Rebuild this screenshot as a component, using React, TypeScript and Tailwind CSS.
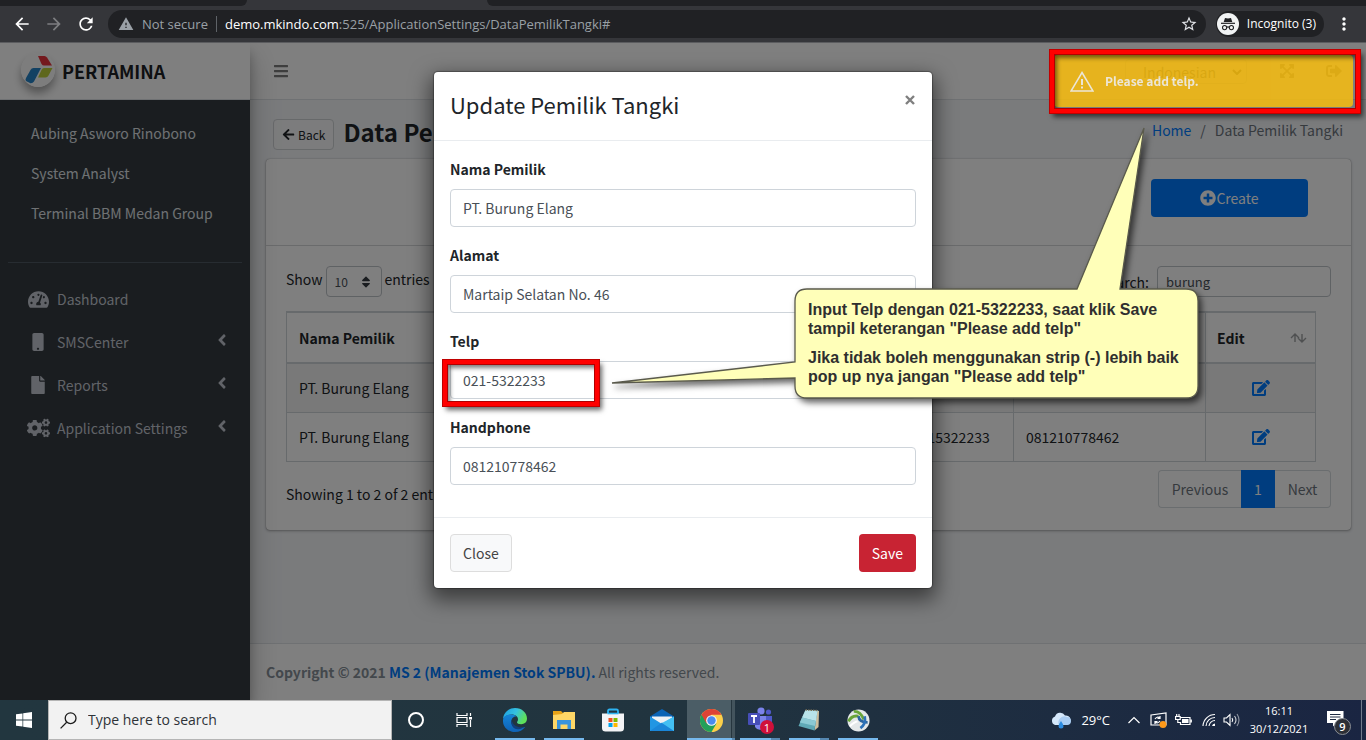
import { useState } from "react";
import type { ReactNode } from "react";
import {
  FaAngleLeft,
  FaArrowLeft,
  FaBars,
  FaCogs,
  FaEdit,
  FaExpandArrowsAlt,
  FaFile,
  FaMobile,
  FaPlusCircle,
  FaSignOutAlt,
  FaSort,
  FaTachometerAlt,
} from "react-icons/fa";
import {
  MdArrowBack,
  MdArrowForward,
  MdMoreVert,
  MdRefresh,
  MdStarBorder,
  MdWarning,
} from "react-icons/md";

function BrowserBar() {
  return (
    <header className="relative z-30 bg-[#35363a] font-['Open_Sans',sans-serif] text-[13px] text-[#9aa0a6]">
      <div className="flex h-[6px] bg-[#35363a]">
        <div className="w-[247px] rounded-br-lg bg-[#202124]" />
        <div className="w-[240px]" />
        <div className="flex-1 rounded-bl-lg bg-[#202124]" />
      </div>
      <div className="flex h-[37px] items-center border-b border-[#5b5c5f] px-[12px]">
        <button type="button" aria-label="Back" className="text-white">
          <MdArrowBack size={20} />
        </button>
        <button type="button" aria-label="Forward" className="ml-3 text-[#7d7e81]">
          <MdArrowForward size={20} />
        </button>
        <button type="button" aria-label="Reload" className="ml-3 text-white">
          <MdRefresh size={20} />
        </button>
        <div className="ml-3 flex h-7 flex-1 items-center rounded-full bg-[#202124] pr-[8px] pl-[10px]">
          <MdWarning size={16} />
          <span className="ml-2">Not secure</span>
          <span className="mx-2 h-4 w-px bg-[#5f6368]" />
          <span>
            <span className="text-white">demo.mkindo.com</span>:525/ApplicationSettings/DataPemilikTangki#
          </span>
          <button type="button" aria-label="Bookmark" className="ml-auto text-[#dfe1e5]">
            <MdStarBorder size={18} />
          </button>
        </div>
        <div className="ml-[10px] flex h-[26px] items-center gap-2 rounded-full bg-[#202124] pr-[8px] pl-[1px] text-[12px] text-white">
          <svg viewBox="0 0 22 22" className="size-[22px]">
            <circle cx="11" cy="11" r="11" fill="#f1f3f4" />
            <path d="M8 5l3 .6L14 5l1.3 4H6.7z" fill="#202124" />
            <path d="M4 10.3h14" stroke="#202124" strokeWidth="1.2" />
            <g fill="none" stroke="#202124" strokeWidth="1.1">
              <circle cx="7.6" cy="14.6" r="2.1" />
              <circle cx="14.4" cy="14.6" r="2.1" />
              <path d="M9.7 14.2q1.3-.7 2.6 0" />
            </g>
          </svg>
          Incognito (3)
        </div>
        <button type="button" aria-label="Browser menu" className="ml-[10px] text-white">
          <MdMoreVert size={20} />
        </button>
      </div>
    </header>
  );
}

function MenuItem({ icon, label, nested }: { icon: ReactNode; label: string; nested?: boolean }) {
  return (
    <li>
      <a href="#" className="flex h-10 items-center pr-[11px] pl-[18px]">
        <span className="flex w-[24px] justify-center">{icon}</span>
        <span className="ml-[7px] flex-1">{label}</span>
        {nested && <FaAngleLeft size={18} className="mb-1" />}
      </a>
    </li>
  );
}

function Sidebar() {
  return (
    <aside className="z-10 flex w-[250px] shrink-0 flex-col bg-[#343a40] shadow-[0_14px_28px_rgba(0,0,0,0.25),0_10px_10px_rgba(0,0,0,0.22)]">
      <a href="#" className="flex h-[57px] items-center border-b border-[#dee2e6] bg-white pl-[21px]">
        <svg viewBox="0 0 34 34" className="mb-[3px] size-[34px] rounded-full shadow-[0_6px_8px_rgba(0,0,0,0.35)]">
          <circle cx="17" cy="17" r="17" fill="#fafafa" />
          <path d="M17 3h6.500q1.500 0 2.500 1.500L31 12.500h-8q-1.500 0-2.500-1.500z" fill="#e8323c" />
          <path d="M12.500 15H20l-7 13.500q-1.200 2-3.500 1.800L5 28q-1-1 0-3l4.500-8q1-2 3-2z" fill="#2583c6" />
          <path d="M23 15h8.500l-4 7.500q-1 2-3 2H17l3.500-7.500q1-2 2.500-2z" fill="#bccf3a" />
        </svg>
        <span className="ml-[7px] text-[18px] font-bold text-[#1d2124]">PERTAMINA</span>
      </a>
      <nav className="px-2 text-[#c2c7d0]">
        <ul className="border-b border-[#4f5962] pt-[13px] pb-[29px] text-[#dfe2e6]">
          {["Aubing Asworo Rinobono", "System Analyst", "Terminal BBM Medan Group"].map((text) => (
            <li key={text}>
              <a href="#" className="flex h-10 items-center pl-[23px]">
                {text}
              </a>
            </li>
          ))}
        </ul>
        <ul className="mt-[16px] flex flex-col gap-[3px]">
          <MenuItem icon={<FaTachometerAlt className="h-[19px] w-[21px]" />} label="Dashboard" />
          <MenuItem icon={<FaMobile size={18} />} label="SMSCenter" nested />
          <MenuItem icon={<FaFile size={18} />} label="Reports" nested />
          <MenuItem icon={<FaCogs className="h-[22px] w-[23px]" />} label="Application Settings" nested />
        </ul>
      </nav>
    </aside>
  );
}

function Navbar() {
  return (
    <div className="flex h-[57px] items-center border-b border-[#dee2e6] bg-white pr-[24px] pl-[23px] text-[#7d7d7d]">
      <button type="button" aria-label="Toggle menu">
        <FaBars size={16} />
      </button>
      <div className="relative ml-auto">
        <select
          aria-label="Language"
          defaultValue="Indonesian"
          className="h-[25px] w-[122px] appearance-none rounded border border-[#ced4da] bg-white pl-[17px] text-[#495057]"
        >
          <option>Indonesian</option>
          <option>English</option>
        </select>
        <svg viewBox="0 0 10 6" className="pointer-events-none absolute top-[10px] right-[5px] w-[10px]">
          <path d="M1 1l4 4 4-4" fill="none" stroke="#343a40" strokeWidth="2" />
        </svg>
      </div>
      <button type="button" aria-label="Full screen" className="ml-[32px]">
        <FaExpandArrowsAlt size={16} />
      </button>
      <button type="button" aria-label="Sign out" className="ml-[31px]">
        <FaSignOutAlt size={16} />
      </button>
    </div>
  );
}

const owners = [
  { name: "PT. Burung Elang", address: "Martaip Selatan No. 46", phone: "0215322233", mobile: "081210778462" },
  { name: "PT. Burung Elang", address: "Martaip Selatan No. 46", phone: "0215322233", mobile: "081210778462" },
];

function OwnersCard() {
  const [query, setQuery] = useState("burung");
  return (
    <section className="rounded bg-white shadow-[0_0_1px_rgba(0,0,0,0.4),0_1px_3px_rgba(0,0,0,0.3)]">
      <div className="flex justify-end border-b border-[#d5d7d9] pt-[20px] pr-[43px] pb-[28px]">
        <button
          type="button"
          className="flex h-[38px] w-[157px] items-center justify-center rounded bg-[#007bff] text-white"
        >
          <FaPlusCircle size={16} />
          Create
        </button>
      </div>
      <div className="px-5 pt-5 pb-[22px]">
        <div className="flex h-[31px] items-start justify-between">
          <label className="flex items-start gap-[3px]">
            <span className="leading-[26px]">Show</span>
            <span className="relative">
              <select
                defaultValue="10"
                className="h-[31px] w-[56px] appearance-none rounded border border-[#bfc4c9] bg-white pl-2 text-[12px] text-[#495057]"
              >
                <option>10</option>
                <option>25</option>
                <option>50</option>
              </select>
              <FaSort size={14} className="pointer-events-none absolute top-[9px] right-[9px] text-[#343a40]" />
            </span>
            <span className="leading-[26px]">entries</span>
          </label>
          <label className="flex items-center gap-2">
            Search:
            <input
              type="search"
              value={query}
              onChange={(e) => setQuery(e.target.value)}
              className="h-[31px] w-[174px] rounded border border-[#bfc4c9] bg-white px-2 text-[13px] text-[#495057]"
            />
          </label>
        </div>
        <div className="pt-[14px] pr-[15px]">
          <table className="w-full table-fixed border-collapse border border-[#cfd4d8] text-left">
            <colgroup>
              <col className="w-[190px]" />
              <col />
              <col className="w-[114px]" />
              <col className="w-[192px]" />
              <col className="w-[110px]" />
            </colgroup>
            <thead>
              <tr className="h-[51px] border-t-2 border-b-2 border-[#cfd4d8]">
                {["Nama Pemilik", "Alamat", "Telp", "Handphone"].map((title) => (
                  <th key={title} className="border-x border-[#cfd4d8] px-3 font-bold">
                    {title}
                  </th>
                ))}
                <th className="border-x border-[#cfd4d8] pr-[8px] pl-[11px] font-bold">
                  <span className="flex items-center justify-between">
                    Edit
                    <svg viewBox="0 0 17 12" className="w-[17px] text-[#9ea0a2]">
                      <path
                        d="M5 10V2M1 6l4-4 4 4M12 2v8M8 6l4 4 4-4"
                        fill="none"
                        stroke="currentColor"
                        strokeWidth="1.4"
                      />
                    </svg>
                  </span>
                </th>
              </tr>
            </thead>
            <tbody>
              {owners.map((owner, i) => (
                <tr key={i} className="h-[49px] border-b border-[#cfd4d8] odd:bg-[#f2f2f2]">
                  <td className="border-x border-[#cfd4d8] px-3">{owner.name}</td>
                  <td className="border-x border-[#cfd4d8] px-3">{owner.address}</td>
                  <td className="border-x border-[#cfd4d8] px-3">{owner.phone}</td>
                  <td className="border-x border-[#cfd4d8] px-3">{owner.mobile}</td>
                  <td className="border-x border-[#cfd4d8] px-3">
                    <a href="#" aria-label="Edit owner" className="flex justify-center text-[#007bff]">
                      <FaEdit size={18} />
                    </a>
                  </td>
                </tr>
              ))}
            </tbody>
          </table>
        </div>
        <div className="mt-[8px] flex items-start justify-between">
          <p className="pt-[12px]">Showing 1 to 2 of 2 entries</p>
          <div className="flex h-[38px] text-[#6c757d]">
            <button type="button" className="w-[83px] rounded-l border border-r-0 border-[#d5dade]">
              Previous
            </button>
            <button type="button" className="w-[34px] bg-[#007bff] text-white">
              1
            </button>
            <button type="button" className="w-[56px] rounded-r border border-l-0 border-[#d5dade]">
              Next
            </button>
          </div>
        </div>
      </div>
    </section>
  );
}

function Content() {
  return (
    <div className="flex min-w-0 flex-1 flex-col bg-[#f4f6f9]">
      <Navbar />
      <main className="flex-1 pr-[15px] pl-4">
        <div className="flex items-start pt-[16px] pb-[9px]">
          <button
            type="button"
            className="mt-[3px] ml-[7px] flex h-[31px] items-center gap-[3px] rounded border border-[#cfd2d5] bg-[#f8f9fa] px-2 text-[12px] text-[#212529]"
          >
            <FaArrowLeft size={13} />
            Back
          </button>
          <h1 className="ml-[9px] text-[24px] leading-8 font-semibold">Data Pemilik Tangki</h1>
          <nav aria-label="Breadcrumb" className="mt-[2px] mr-[8px] ml-auto flex gap-[9px] text-[#6c757d]">
            <a href="#" className="text-[#007bff]">
              Home
            </a>
            <span>/</span>
            <span>Data Pemilik Tangki</span>
          </nav>
        </div>
        <OwnersCard />
      </main>
      <footer className="border-t border-[#dee2e6] bg-white px-4 pt-4 pb-4 text-[#869099]">
        <strong>
          Copyright © 2021{" "}
          <a href="#" className="text-[#007bff]">
            MS 2 (Manajemen Stok SPBU).
          </a>
        </strong>{" "}
        All rights reserved.
      </footer>
    </div>
  );
}

const fields = [
  { id: "nama", label: "Nama Pemilik", value: "PT. Burung Elang" },
  { id: "alamat", label: "Alamat", value: "Martaip Selatan No. 46" },
  { id: "telp", label: "Telp", value: "021-5322233" },
  { id: "handphone", label: "Handphone", value: "081210778462" },
];

function UpdateDialog() {
  return (
    <form
      role="dialog"
      aria-labelledby="dialog-title"
      onSubmit={(e) => e.preventDefault()}
      className="w-[498px] rounded bg-white shadow-[0_0_1px_1px_rgba(0,0,0,0.3),0_8px_20px_4px_rgba(0,0,0,0.5)]"
    >
      <div className="flex items-start justify-between border-b border-[#e9ecef] p-4">
        <h2 id="dialog-title" className="text-[22px] leading-8 font-normal">
          Update Pemilik Tangki
        </h2>
        <button
          type="button"
          aria-label="Close dialog"
          className="mb-3 flex h-6 items-center text-[#7f7f7f]"
        >
          <svg viewBox="0 0 12 12" className="size-[12px]">
            <path d="M2 2l8 8M10 2l-8 8" fill="none" stroke="currentColor" strokeWidth="2.4" />
          </svg>
        </button>
      </div>
      <div className="p-4">
        {fields.map((field) => (
          <div key={field.id} className="mb-4">
            <label htmlFor={field.id} className="mb-2 block font-bold">
              {field.label}
            </label>
            <input
              id={field.id}
              defaultValue={field.value}
              className="h-[38px] w-full rounded border border-[#ced4da] px-3 text-[#495057]"
            />
          </div>
        ))}
      </div>
      <div className="flex justify-between border-t border-[#e9ecef] p-4">
        <button type="button" className="h-[38px] rounded border border-[#ddd] bg-[#f8f9fa] px-3 text-[#444]">
          Close
        </button>
        <button type="submit" className="h-[38px] rounded bg-[#c82333] px-[13px] text-white">
          Save
        </button>
      </div>
    </form>
  );
}

function Toast() {
  return (
    <div
      role="alert"
      className="absolute top-[12px] right-[13px] z-20 flex h-[52px] w-[299px] items-center rounded-sm bg-[#f8bd0e] pl-4 text-[12px] font-bold text-white opacity-85"
    >
      <svg viewBox="0 0 24 21" className="h-[21px] w-[24px]" fill="none" stroke="#fff8e6">
        <path d="M12 1.500L23 20H1z" strokeWidth="1.500" />
        <path d="M12 8v6M12 15.500v2" strokeWidth="2" />
      </svg>
      <span className="ml-[11px] text-[#fff8e6]">Please add telp.</span>
    </div>
  );
}

function Annotations() {
  return (
    <>
      <div className="absolute top-[7px] right-[6px] z-20 h-[63px] w-[310px] border-[4px] border-[#ff0000] shadow-[0_0_0_1px_#c00000,3px_4px_5px_rgba(0,0,0,0.6),inset_0_0_0_1px_#b00000,inset_3px_4px_4px_rgba(0,0,0,0.5)]" />
      <div className="absolute top-[317px] left-[443px] z-20 h-[46px] w-[156px] border-[4px] border-[#ff0000] shadow-[0_0_0_1px_#c00000,3px_4px_5px_rgba(0,0,0,0.6),inset_0_0_0_1px_#b00000,inset_3px_4px_4px_rgba(0,0,0,0.5)]" />
      <div className="absolute top-[78px] left-[604px] z-20 w-[604px]">
        <svg
          viewBox="0 0 604 290"
          className="block h-[290px] w-[604px] drop-shadow-[3px_4px_3px_rgba(0,0,0,0.6)]"
          aria-hidden="true"
        >
          <path
            d="M203 168H473L540 7L516 168H582Q594 168 594 180V265Q594 277 582 277H203Q191 277 191 265V257L8 262L191 241V180Q191 168 203 168Z"
            fill="#ffffb9"
            stroke="#5a5a4c"
            strokeWidth="1.300"
          />
        </svg>
        <div className="absolute inset-x-0 top-[179px] flex flex-col gap-[10px] pr-[12px] pl-[204px] font-['Liberation_Sans',Arial,sans-serif] text-[16px] leading-[19px] font-bold text-[#2f2f2f]">
          <p>
            Input Telp dengan 021-5322233, saat klik Save
            <br />
            tampil keterangan "Please add telp"
          </p>
          <p>
            Jika tidak boleh menggunakan strip (-) lebih baik
            <br />
            pop up nya jangan "Please add telp"
          </p>
        </div>
      </div>
    </>
  );
}

const EdgeIcon = (
  <svg viewBox="0 0 24 24" className="size-6">
    <defs>
      <linearGradient id="edge-top" x1="0" y1="0" x2="1" y2="0.400">
        <stop offset="0" stopColor="#1b9de2" />
        <stop offset="0.550" stopColor="#35c1e0" />
        <stop offset="1" stopColor="#5ee05a" />
      </linearGradient>
      <linearGradient id="edge-low" x1="0" y1="0" x2="0" y2="1">
        <stop offset="0" stopColor="#1484d7" />
        <stop offset="1" stopColor="#0f62b5" />
      </linearGradient>
    </defs>
    <path d="M0 11C.6 4.600 5.700 0 12 0c7 0 12 5 12 10.500 0 3.600-2.600 5.700-5.800 5.700-2.600 0-4.200-1-4.200-2 0-.8 1-1 1-3C15 8.500 12 6.500 8.500 6.500 4 6.500 1 9 0 11z" fill="url(#edge-top)" />
    <path d="M0 12c.5-3.600 4-5.500 8-5.500 2.500 0 4.400.8 5.600 2.200-3-.6-5.300 2-5.300 5 0 5 5 8.300 10 6.500 1.500-.6 2.800-1.300 3.700-1.200C20 22 16.500 24 12 24 5.300 24-.4 19 0 12z" fill="url(#edge-low)" />
    <path d="M8.700 12c-1.700 6 3 10.500 8 9 2-.6 4-1.700 5-2.600-4.700 2.200-11.500.3-13-6.400z" fill="#123f7c" />
  </svg>
);

const ExplorerIcon = (
  <svg viewBox="0 0 22 20" className="w-[22px]">
    <path d="M0 1h8l2 2h12v16H0z" fill="#e8a317" />
    <path d="M0 5l9-1 2-2h11v17H0z" fill="#ffd766" />
    <path d="M4 10h14v9h-3.500v-4.500h-7V19H4z" fill="#3a94dc" />
  </svg>
);

const StoreIcon = (
  <svg viewBox="0 0 24 24" className="size-6">
    <path d="M7 7V3q0-1.500 1.500-1.500h7Q17 1.500 17 3v4" fill="none" stroke="#2db3f2" strokeWidth="1.800" />
    <path d="M1 5.500h22V20q0 3.500-3.500 3.500h-15Q1 23.500 1 20z" fill="#f4f4f6" />
    <path d="M6.500 5.500h11" stroke="#2db3f2" strokeWidth="1.600" />
    <path d="M7.500 10h4v4h-4z" fill="#f25022" />
    <path d="M12.500 10h4v4h-4z" fill="#7fba00" />
    <path d="M7.500 15h4v4h-4z" fill="#00a4ef" />
    <path d="M12.500 15h4v4h-4z" fill="#ffb900" />
  </svg>
);

const MailIcon = (
  <svg viewBox="0 0 24 22" className="w-6">
    <path d="M0 7.500L12 0l12 7.500V12H0z" fill="#0a63b5" />
    <path d="M2 7.500h20V15H2z" fill="#eef1f4" />
    <path d="M0 7.500l12 7.500L24 7.500V22H0z" fill="#2196e3" />
    <path d="M0 22l12-8.500L24 22z" fill="#1a86d8" />
    <path d="M12 14L24 7.500V22z" fill="#43bff2" />
  </svg>
);

const ChromeIcon = (
  <svg viewBox="0 0 24 24" className="size-[23px]">
    <circle cx="12" cy="12" r="12" fill="#fcd04a" />
    <path d="M12 12l5.200 3L12 24A12 12 0 0 1 1.600 6z" fill="#23a05a" />
    <path d="M12 6h10.400a12 12 0 0 0-20.800 0l5.200 9z" fill="#de4335" />
    <circle cx="12" cy="12" r="5.600" fill="#f4f6f8" />
    <circle cx="12" cy="12" r="4.400" fill="#4a8bf0" />
  </svg>
);

const TeamsIcon = (
  <svg viewBox="0 0 26 26" className="size-[26px]">
    <circle cx="14" cy="4" r="3.600" fill="#7b83eb" />
    <circle cx="21.500" cy="5" r="2.600" fill="#5059c9" />
    <path d="M17 9h8v7a4 4 0 0 1-6 3z" fill="#5059c9" />
    <path d="M8 9h11v8a6 6 0 0 1-11 3z" fill="#7b83eb" />
    <rect x="1" y="6" width="12" height="12" rx="1" fill="#464eb8" />
    <path d="M4 9h6M7 9v7" stroke="#fff" strokeWidth="1.800" />
  </svg>
);

const NotepadIcon = (
  <svg viewBox="0 0 24 24" className="size-6">
    <path d="M20 2.500l2 .5-.5 16-4 3.500z" fill="#cdbf9e" />
    <path d="M8.500 2L20.500 2.500 17.500 22.500 1.500 18z" fill="#5fa9b6" />
    <path d="M8.500 2L20.500 2.500 19 13 5 9.500z" fill="#b9e4ea" />
    <path d="M5 9.500L19 13l-.8 5L2.800 14.500z" fill="#8ccad4" />
    <path d="M8.500 2l12 .5" stroke="#7d7257" strokeWidth="1.400" strokeDasharray="1.500 1" />
  </svg>
);

const SyncIcon = (
  <svg viewBox="0 0 24 24" className="size-[23px]">
    <circle cx="12" cy="12" r="11.500" fill="#e4e8e9" />
    <path d="M1.500 13Q5 6 12 7.500" fill="none" stroke="#68a43a" strokeWidth="3" />
    <path d="M7 2.500Q14 2 17.500 11" fill="none" stroke="#68a43a" strokeWidth="3" />
    <path d="M12 7.500q.5 6.500 9.500 6.500" fill="none" stroke="#2c66a0" strokeWidth="2.800" />
    <path d="M18.500 7.500q1.500 8-4.500 12.500" fill="none" stroke="#2d72b8" strokeWidth="2.800" />
    <path d="M3 18q5-5 8-5" fill="none" stroke="#fff" strokeWidth="2" />
  </svg>
);

function TaskButton({
  label,
  running,
  active,
  stacked,
  children,
}: {
  label: string;
  running?: boolean;
  active?: boolean;
  stacked?: boolean;
  children: ReactNode;
}) {
  return (
    <button
      type="button"
      aria-label={label}
      className={`relative flex h-10 w-12 items-center justify-center ${active ? "bg-[#4b5d66]" : ""}`}
    >
      {children}
      {active && <span className="absolute inset-y-0 right-0 w-[4px] border-l border-[#26363f] bg-[#43545d]" />}
      {running && (
        <span className={`absolute bottom-0 flex h-[2px] bg-[#76b9ed] ${active ? "inset-x-0" : "inset-x-1"}`}>
          {stacked && <span className={`ml-auto bg-[#5587b0] ${active ? "w-[3px]" : "w-[9px]"}`} />}
        </span>
      )}
    </button>
  );
}

function Taskbar() {
  return (
    <footer className="relative z-30 flex h-10 items-center bg-linear-to-r from-[#22363f] via-[#21343f] to-[#1a2542] font-['Open_Sans',sans-serif] text-white">
      <button type="button" aria-label="Start" className="flex w-12 justify-center">
        <svg viewBox="0 0 16 16" className="size-4" fill="#fff">
          <path d="M0 2.300l6.500-.9v6.200H0zM7.200 1.300L16 0v7.600H7.200zM0 8.400h6.500v6.200L0 13.700zM7.200 8.400H16V16l-8.800-1.300z" />
        </svg>
      </button>
      <label className="flex h-10 w-[344px] items-center border border-[#b5b5b5] bg-[#f2f2f2] pl-[11px]">
        <svg viewBox="0 0 17 17" className="size-[17px]" fill="none" stroke="#1c1c1c" strokeWidth="1.300">
          <circle cx="10.600" cy="6.200" r="5.400" />
          <path d="M6.700 10.200L.6 16.400" />
        </svg>
        <input
          type="text"
          aria-label="Search Windows"
          placeholder="Type here to search"
          className="ml-[11px] flex-1 bg-transparent text-[14px] placeholder:text-[#2e3338]"
        />
      </label>
      <TaskButton label="Cortana">
        <span className="size-4 rounded-full border-2 border-white" />
      </TaskButton>
      <TaskButton label="Task view">
        <svg viewBox="0 0 16 16" className="size-4" fill="none" stroke="#fff" strokeWidth="1.200">
          <path d="M1 1v2.500h10V1M1 15v-2.500h10V15M1 5.500h10v5H1zM14.500 1v3M14.500 8v7" />
          <path d="M13 5h3v2.500h-3z" fill="#fff" stroke="none" />
        </svg>
      </TaskButton>
      <div className="ml-[3px] flex gap-px">
        <TaskButton label="Edge" running>
          {EdgeIcon}
        </TaskButton>
        <TaskButton label="File Explorer" running>
          {ExplorerIcon}
        </TaskButton>
        <TaskButton label="Store">{StoreIcon}</TaskButton>
        <TaskButton label="Mail">{MailIcon}</TaskButton>
        <TaskButton label="Chrome" running active stacked>
          {ChromeIcon}
        </TaskButton>
        <TaskButton label="Teams" running stacked>
          {TeamsIcon}
          <span className="absolute top-[20px] left-[24px] flex size-[14px] items-center justify-center rounded-full bg-[#d0103a] text-[11px] leading-none">
            1
          </span>
        </TaskButton>
        <TaskButton label="Notepad" running stacked>
          {NotepadIcon}
        </TaskButton>
        <TaskButton label="Sync" running>
          {SyncIcon}
        </TaskButton>
      </div>
      <div className="ml-auto flex items-center">
        <svg viewBox="0 0 22 17" className="w-[22px]">
          <path d="M5 13a4.500 4.500 0 0 1 0-8.500A5.500 5.500 0 0 1 15 3.500a4.800 4.800 0 0 1 1.500 9.500z" fill="#d5e8fb" />
          <path d="M9 13h8a4 4 0 0 0 0-8 6 6 0 0 0-8 8z" fill="#a9cdf3" />
          <path d="M11 9q2.500 3.500 2.500 5a2.500 2.500 0 0 1-5 0q0-1.500 2.500-5z" fill="#2b8be0" />
        </svg>
        <span className="ml-[9px] text-[13px]">29°C</span>
        <svg viewBox="0 0 12 8" className="ml-[18px] w-3" fill="none" stroke="#fff" strokeWidth="1.200">
          <path d="M.5 7L6 1.500 11.500 7" />
        </svg>
        <svg viewBox="0 0 17 17" className="ml-[10px] size-[17px]" fill="none" stroke="#fff" strokeWidth="1.200">
          <path d="M1 3l15-2v12H1zM5 7q2-3 5-1M10 4v2.500H7.500M10 9q-2 3-5 1M5 12V9.500h2.500" />
          <circle cx="13" cy="12.500" r="3.500" fill="#ff9a1a" stroke="none" />
        </svg>
        <svg viewBox="0 0 17 12" className="ml-[8px] w-[17px]" fill="none" stroke="#fff" strokeWidth="1.200">
          <path d="M5.500 3.500h9.500v7H5.500V8M16.300 5.500v3M2.800 5.500v3h2.700M.6 2.500v3h4.600v-3zM1.700 0v2.500M4 0v2.500" />
          <path d="M7 5h6.500v4H7z" fill="#fff" stroke="none" />
        </svg>
        <svg viewBox="0 0 14 14" className="ml-[10px] size-[14px]" fill="none" stroke="#fff">
          <path d="M1 13A12 12 0 0 1 13 1.500M4 13a9 9 0 0 1 9-8.500M7 13a6 6 0 0 1 6-5.500" strokeWidth="1.100" />
          <path d="M10 13a3 3 0 0 1 3-2.500V13z" fill="#fff" stroke="none" />
        </svg>
        <svg viewBox="0 0 17 14" className="ml-[7px] w-[17px]" fill="none" stroke="#fff" strokeWidth="1.100">
          <path d="M1 5v4h2.500L7 12.500v-11L3.500 5zM9 5q1.500 2 0 4" />
          <path d="M11.500 3q3 4 0 8" opacity=".8" />
          <path d="M14 1q4 6 0 12" opacity=".5" />
        </svg>
        <div className="ml-[7px] w-[64px] text-center text-[11px] leading-[18px]">
          16:11
          <br />
          30/12/2021
        </div>
        <button type="button" aria-label="Notifications" className="relative ml-[14px] h-6 w-6">
          <svg viewBox="0 0 17 16" className="absolute top-[3px] left-[2px] w-[17px]">
            <path d="M0 0h16.500v12H9.500L6 15.500V12H0z" fill="#fff" />
            <path d="M3 3.500h10.500M3 6h10.500M3 8.500h6" stroke="#1c2942" />
          </svg>
          <span className="absolute top-[10px] left-[9px] flex size-[17px] items-center justify-center rounded-full border border-[#8b8f96] bg-[#2c2f36] text-[11px] leading-none font-semibold">
            9
          </span>
        </button>
        <span className="ml-[12px] h-10 w-[5px] border-l border-[#707a8c]" />
      </div>
    </footer>
  );
}

export default function App() {
  return (
    <div className="flex min-h-screen flex-col font-['Noto_Sans_CJK_SC',sans-serif] text-[14px] leading-6 text-[#212529]">
      <BrowserBar />
      <div className="relative flex flex-1">
        <Sidebar />
        <Content />
        <div className="absolute inset-0 z-10 flex items-start justify-center overflow-hidden bg-black/50 pt-[29px]">
          <UpdateDialog />
        </div>
        <Toast />
        <Annotations />
      </div>
      <Taskbar />
    </div>
  );
}
